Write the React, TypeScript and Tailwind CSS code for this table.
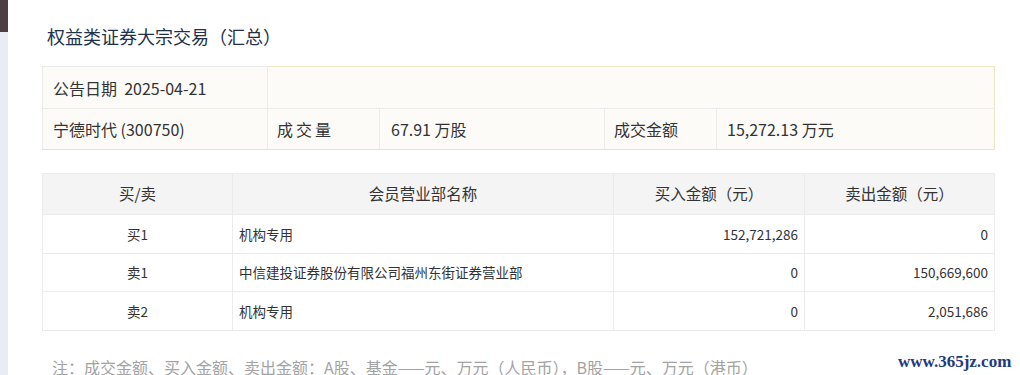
const font = { fontFamily: '"Noto Sans CJK SC", "Noto Sans", sans-serif' };

const rows = [
    { side: '买1', name: '机构专用', buy: '152,721,286', sell: '0' },
    { side: '卖1', name: '中信建投证券股份有限公司福州东街证券营业部', buy: '0', sell: '150,669,600' },
    { side: '卖2', name: '机构专用', buy: '0', sell: '2,051,686' },
];

export default function App() {
    return (
        <div className="relative flex h-[375px] w-[1020px] overflow-hidden bg-white text-[#333]" style={font}>
            {/* left edge of the page */}
            <div className="flex w-[8px] flex-col">
                <div className="h-[32px] bg-[#4d3e43]" />
                <div className="flex-1 bg-[#e9ecf5]" />
            </div>

            <div className="w-[953px] pl-[34px]">
                <h1 className="mt-[23px] pl-[5px] text-[18px] leading-[26px] text-[#22304a]">权益类证券大宗交易（汇总）</h1>

                <table className="mt-[17px] w-[953px] table-fixed border-collapse bg-[#fcfbf8] text-[16px]">
                    <colgroup>
                        <col className="w-[225px]" />
                        <col className="w-[112px]" />
                        <col className="w-[225px]" />
                        <col className="w-[112px]" />
                        <col />
                    </colgroup>
                    <tbody>
                        <tr className="h-[42px]">
                            <td className="border border-[#ebebeb] pl-[10px]">公告日期&nbsp; 2025-04-21</td>
                            <td colSpan={4} className="border border-[#ebebeb] border-t-[#efe4c4] border-r-[#efe4c4]" />
                        </tr>
                        <tr className="h-[41px]">
                            <td className="border border-[#ebebeb] border-b-[#ece2c2] pl-[10px]">宁德时代 (300750)</td>
                            <td className="border border-[#ebebeb] border-b-[#ece2c2] pl-[9px] tracking-[3px]">成交量</td>
                            <td className="border border-[#ebebeb] border-b-[#ece2c2] pl-[11px]">67.91 万股</td>
                            <td className="border border-[#ebebeb] border-b-[#ece2c2] pl-[9px]">成交金额</td>
                            <td className="border border-[#ebebeb] border-b-[#ece2c2] border-r-[#efe4c4] pl-[10px]">15,272.13 万元</td>
                        </tr>
                    </tbody>
                </table>

                <table className="mt-[23px] w-[953px] table-fixed border-collapse text-[13.5px]">
                    <colgroup>
                        <col className="w-[190px]" />
                        <col className="w-[381px]" />
                        <col className="w-[191px]" />
                        <col />
                    </colgroup>
                    <thead>
                        <tr className="h-[41px] bg-[#f4f4f4] text-[15.5px]">
                            <th className="border border-[#ebebeb] font-normal">买/卖</th>
                            <th className="border border-[#ebebeb] font-normal">会员营业部名称</th>
                            <th className="border border-[#ebebeb] font-normal">买入金额（元）</th>
                            <th className="border border-[#ebebeb] font-normal">卖出金额（元）</th>
                        </tr>
                    </thead>
                    <tbody>
                        {rows.map((r, i) => (
                            <tr key={i} className="h-[38.5px]">
                                <td className="border border-[#ebebeb] text-center">{r.side}</td>
                                <td className="border border-[#ebebeb] pl-[6px]">{r.name}</td>
                                <td className="border border-[#ebebeb] pr-[6px] text-right">{r.buy}</td>
                                <td className="border border-[#ebebeb] pr-[6px] text-right">{r.sell}</td>
                            </tr>
                        ))}
                    </tbody>
                </table>

                <p className="mt-[26px] pl-[10px] text-[16px] leading-[20px] text-[#a3a3a3]">
                    注：成交金额、买入金额、卖出金额：A股、基金——元、万元（人民币），B股——元、万元（港币）
                </p>
            </div>

            <div
                className="absolute left-[898px] top-[349px] text-[17px] font-bold text-[#1f3b7c]"
                style={{ fontFamily: '"Liberation Serif", serif' }}
            >
                www.365jz.com
            </div>
        </div>
    );
}
